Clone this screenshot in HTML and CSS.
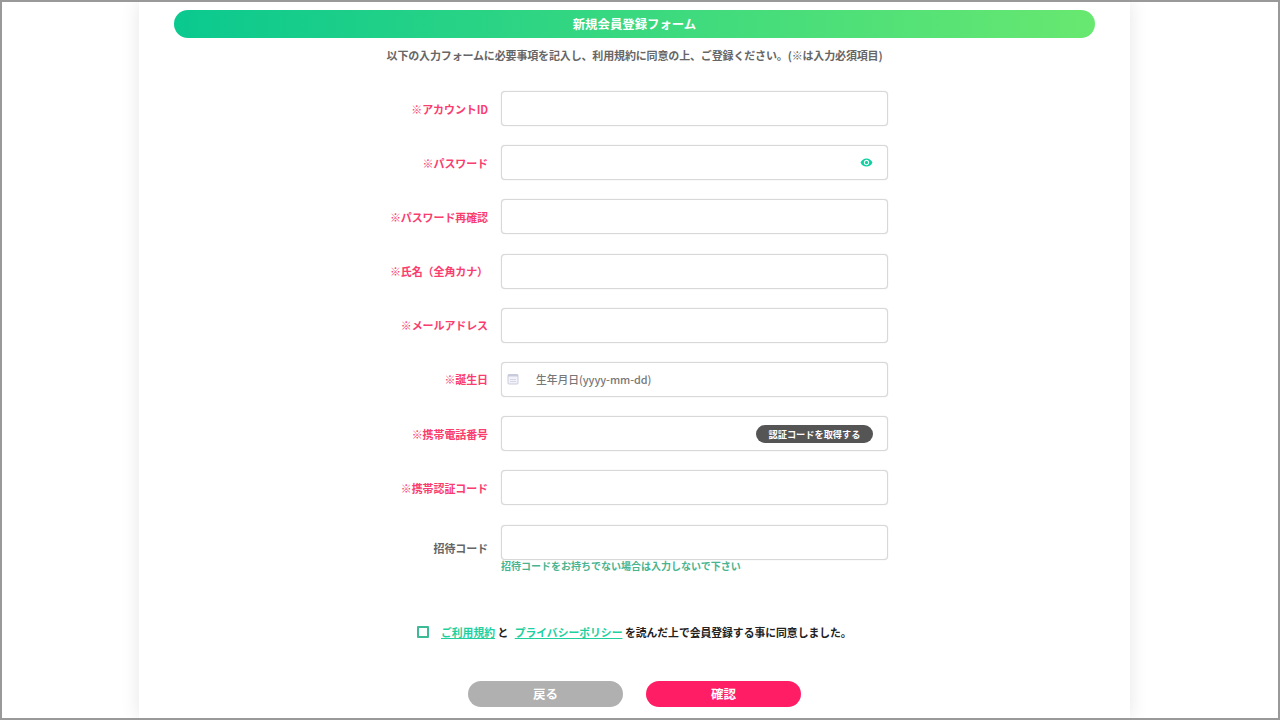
FILE: index.html
```html
<!DOCTYPE html>
<html lang="ja">
<head>
    <meta charset="UTF-8">
    <meta name="viewport" content="width=device-width, initial-scale=1.0">
    <title>新規会員登録フォーム</title>
    <link rel="stylesheet" href="styles.css">
</head>
<body>
    <div class="frame">
        <div class="card">
            <h2 class="form-title">新規会員登録フォーム</h2>
            <p class="form-lead">以下の入力フォームに必要事項を記入し、利用規約に同意の上、ご登録ください。(※は入力必須項目)</p>
            <form class="form-rows" action="#" method="post">
                <div class="form-row">
                    <label class="form-label required">※アカウントID</label>
                    <div class="field"></div>
                </div>
                <div class="form-row">
                    <label class="form-label required">※パスワード</label>
                    <div class="field field-end">
                        <svg class="eye-icon" viewBox="0 0 24 24" width="13" height="13"><path fill="#0fd0a0" d="M12 4.5C7 4.5 2.7 7.6 1 12c1.7 4.4 6 7.5 11 7.5s9.3-3.1 11-7.5c-1.7-4.4-6-7.5-11-7.5zM12 17c-2.8 0-5-2.2-5-5s2.2-5 5-5 5 2.2 5 5-2.2 5-5 5zm0-8c-1.7 0-3 1.3-3 3s1.3 3 3 3 3-1.3 3-3-1.3-3-3-3z"/></svg>
                    </div>
                </div>
                <div class="form-row">
                    <label class="form-label required">※パスワード再確認</label>
                    <div class="field"></div>
                </div>
                <div class="form-row">
                    <label class="form-label required">※氏名（全角カナ）</label>
                    <div class="field"></div>
                </div>
                <div class="form-row">
                    <label class="form-label required">※メールアドレス</label>
                    <div class="field"></div>
                </div>
                <div class="form-row">
                    <label class="form-label required">※誕生日</label>
                    <div class="field field-date">
                        <svg class="calendar-icon" viewBox="0 0 12 12" width="12" height="12"><rect x="1" y="1.5" width="10" height="9.5" rx="1" fill="#f2f3f8" stroke="#c9cbdc"/><rect x="1" y="1.5" width="10" height="2" fill="#c9cbdc"/><path d="M3 6.5h6M3 8.5h6" stroke="#d5d7e4"/></svg>
                        <span class="date-hint">生年月日(yyyy-mm-dd)</span>
                    </div>
                </div>
                <div class="form-row">
                    <label class="form-label required">※携帯電話番号</label>
                    <div class="field field-end">
                        <button class="code-button" type="button">認証コードを取得する</button>
                    </div>
                </div>
                <div class="form-row">
                    <label class="form-label required">※携帯認証コード</label>
                    <div class="field"></div>
                </div>
                <div class="form-row">
                    <label class="form-label label-low">招待コード</label>
                    <div class="field"></div>
                </div>
            </form>
            <p class="invite-note">招待コードをお持ちでない場合は入力しないで下さい</p>
            <div class="agree">
                <span class="agree-box"></span>
                <span class="agree-text"><a href="#">ご利用規約</a> と <a class="second-link" href="#">プライバシーポリシー</a> を読んだ上で会員登録する事に同意しました。</span>
            </div>
            <div class="button-container">
                <button class="back-button" type="button">戻る</button>
                <button class="confirm-button" type="button">確認</button>
            </div>
        </div>
    </div>
</body>
</html>
```
FILE: styles.css
```css
html, body {
    margin: 0;
    padding: 0;
    height: 720px;
    overflow: hidden;
    background-color: #fff;
    font-family: "Noto Sans CJK JP", "Noto Sans", sans-serif;
}
.frame {
    box-sizing: border-box;
    height: 720px;
    border: 2px solid #999;
    overflow: hidden;
    display: flex;
    justify-content: center;
}
.card {
    box-sizing: border-box;
    width: 991px;
    height: 716px;
    margin-right: 11px;
    padding: 8px 35px 0;
    background-color: #fff;
    box-shadow: 0 0 18px rgba(0, 0, 0, 0.1);
}
.form-title {
    margin: 0;
    height: 28px;
    line-height: 28px;
    border-radius: 14px;
    text-align: center;
    font-size: 12.4px;
    font-weight: 700;
    color: #fff;
    background: linear-gradient(90deg, #0ac98f, #68e870);
}
.form-lead {
    margin: 8px 0 0;
    height: 18px;
    line-height: 18px;
    text-align: center;
    font-size: 11px;
    letter-spacing: -0.15px;
    font-weight: 700;
    color: #666;
}
.form-rows {
    margin-top: 27px;
    display: flex;
    flex-direction: column;
    gap: 19.2px;
}
.form-row {
    display: flex;
    align-items: center;
    gap: 13px;
}
.form-label {
    width: 314px;
    text-align: right;
    font-size: 11px;
    letter-spacing: -0.1px;
    font-weight: 700;
    color: #666;
}
.form-label.required {
    color: #fa3d6f;
}
.label-low {
    position: relative;
    top: 6px;
}
.field {
    box-sizing: border-box;
    width: 387px;
    height: 35px;
    border: 1px solid #d8d8d8;
    border-radius: 4px;
    box-shadow: 0 0 1px rgba(0, 0, 0, 0.2);
    background-color: #fff;
    display: flex;
    align-items: center;
}
.field-end {
    justify-content: flex-end;
    padding-right: 14px;
}
.field-date {
    padding-left: 5px;
}
.calendar-icon {
    flex: none;
}
.date-hint {
    margin-left: 17px;
    margin-top: -1px;
    font-size: 10.8px;
    letter-spacing: -0.05px;
    font-weight: 500;
    color: #777;
}
.code-button {
    padding: 0;
    width: 117px;
    height: 18px;
    border: none;
    border-radius: 9px;
    background-color: #555;
    color: #fff;
    font-family: inherit;
    font-size: 9.2px;
    font-weight: 700;
}
.invite-note {
    margin: 0 0 0 327px;
    height: 12px;
    line-height: 12px;
    font-size: 10px;
    font-weight: 700;
    color: #48b48f;
}
.agree {
    margin: 53px 0 0 243px;
    display: flex;
    align-items: center;
    height: 14px;
}
.agree-box {
    box-sizing: border-box;
    width: 12px;
    height: 12px;
    border: 2px solid #3dbb97;
    border-radius: 1px;
}
.agree-text {
    margin-left: 12px;
    font-size: 10.8px;
    font-weight: 700;
    color: #222;
    white-space: pre;
}
.agree-text a {
    color: #1fd09f;
    text-decoration: underline;
}
.second-link {
    margin-left: 4px;
}
.button-container {
    margin-top: 42px;
    display: flex;
    justify-content: center;
    gap: 23px;
}
.back-button,
.confirm-button {
    width: 155px;
    height: 26px;
    padding: 0;
    border: none;
    border-radius: 13px;
    color: #fff;
    font-family: inherit;
    font-size: 12.5px;
    font-weight: 700;
}
.back-button {
    background-color: #b0b0b0;
}
.confirm-button {
    background-color: #ff1e66;
}
```
